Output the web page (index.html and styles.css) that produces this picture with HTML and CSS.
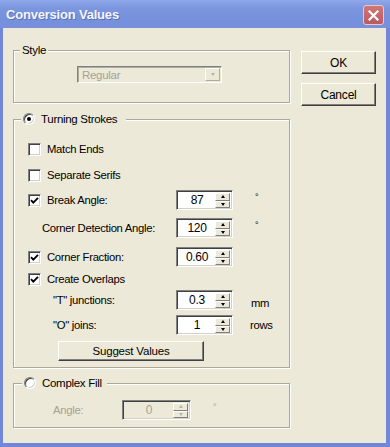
FILE: index.html
```html
<!DOCTYPE html>
<html>
<head>
  <meta charset="utf-8">
  <title>Conversion Values</title>
  <link rel="stylesheet" href="styles.css">
</head>
<body>
  <div class="window">
    <div class="titlebar">
      <span class="title">Conversion Values</span>
      <button class="close-btn" aria-label="Close">
        <svg width="11" height="11" viewBox="0 0 11 11"><path d="M1.5 1.5 L9.5 9.5 M9.5 1.5 L1.5 9.5" stroke="#fff" stroke-width="2.2" stroke-linecap="square"/></svg>
      </button>
    </div>

    <div class="client">
      <div class="groups">

        <!-- Style -->
        <div class="group style-group">
          <div class="group-title"><span>Style</span></div>
          <div class="combo disabled">
            <span class="combo-val">Regular</span>
            <span class="combo-btn"><span class="arrow-down"></span></span>
          </div>
        </div>

        <!-- Turning Strokes -->
        <div class="group strokes-group">
          <div class="group-title">
            <span class="radio checked"></span>
            <span>Turning Strokes</span>
          </div>

          <div class="row r-match">
            <label class="lbl"><span class="check"></span>Match Ends</label>
          </div>
          <div class="row r-serifs">
            <label class="lbl"><span class="check"></span>Separate Serifs</label>
          </div>
          <div class="row r-break">
            <label class="lbl"><span class="check on"><svg width="9" height="9" viewBox="0 0 9 9"><path d="M1 4.2 L3.3 6.6 L8 1.8" fill="none" stroke="#000" stroke-width="1.9"/></svg></span>Break Angle:</label>
            <div class="spin"><span class="spin-val">87</span><span class="spin-btns"><span class="sb"><i class="arrow-up"></i></span><span class="sb"><i class="arrow-down"></i></span></span></div>
            <span class="unit deg">°</span>
          </div>
          <div class="row r-corner">
            <span class="lbl indent">Corner Detection Angle:</span>
            <div class="spin"><span class="spin-val">120</span><span class="spin-btns"><span class="sb"><i class="arrow-up"></i></span><span class="sb"><i class="arrow-down"></i></span></span></div>
            <span class="unit deg">°</span>
          </div>
          <div class="row r-fraction">
            <label class="lbl"><span class="check on"><svg width="9" height="9" viewBox="0 0 9 9"><path d="M1 4.2 L3.3 6.6 L8 1.8" fill="none" stroke="#000" stroke-width="1.9"/></svg></span>Corner Fraction:</label>
            <div class="spin"><span class="spin-val">0.60</span><span class="spin-btns"><span class="sb"><i class="arrow-up"></i></span><span class="sb"><i class="arrow-down"></i></span></span></div>
          </div>
          <div class="row r-overlaps">
            <label class="lbl"><span class="check on"><svg width="9" height="9" viewBox="0 0 9 9"><path d="M1 4.2 L3.3 6.6 L8 1.8" fill="none" stroke="#000" stroke-width="1.9"/></svg></span>Create Overlaps</label>
          </div>
          <div class="row r-tjunc">
            <span class="lbl sub">"T" junctions:</span>
            <div class="spin"><span class="spin-val">0.3</span><span class="spin-btns"><span class="sb"><i class="arrow-up"></i></span><span class="sb"><i class="arrow-down"></i></span></span></div>
            <span class="unit mm">mm</span>
          </div>
          <div class="row r-ojoin">
            <span class="lbl sub">"O" joins:</span>
            <div class="spin"><span class="spin-val">1</span><span class="spin-btns"><span class="sb"><i class="arrow-up"></i></span><span class="sb"><i class="arrow-down"></i></span></span></div>
            <span class="unit rows">rows</span>
          </div>
          <button class="btn suggest-btn">Suggest Values</button>
        </div>

        <!-- Complex Fill -->
        <div class="group fill-group">
          <div class="group-title">
            <span class="radio"></span>
            <span>Complex Fill</span>
          </div>
          <div class="row angle-row disabled">
            <span class="lbl sub">Angle:</span>
            <div class="spin wide"><span class="spin-val">0</span><span class="spin-btns"><span class="sb"><i class="arrow-up"></i></span><span class="sb"><i class="arrow-down"></i></span></span></div>
            <span class="unit deg">°</span>
          </div>
        </div>
      </div>

      <div class="actions">
        <button class="btn">OK</button>
        <button class="btn">Cancel</button>
      </div>
    </div>
  </div>
</body>
</html>
```

FILE: styles.css
```css
:root {
  --face: #ece9d8;
  --frame: #7387d8;
  --shadow: #808080;
  --dark: #404040;
  --disabled: #a5a296;
}

* {
  box-sizing: border-box;
  margin: 0;
  padding: 0;
}

html, body {
  width: 390px;
  height: 447px;
  overflow: hidden;
  background: var(--face);
  font-family: "Liberation Sans", Arial, sans-serif;
  font-size: 11px;
  letter-spacing: -0.3px;
  color: #000;
}

.window {
  display: flex;
  flex-direction: column;
  width: 390px;
  height: 447px;
}

/* Title bar */
.titlebar {
  height: 28px;
  display: flex;
  align-items: center;
  padding: 0 6px 0 6px;
  background: linear-gradient(#90a8ea, #7b95de 30%, #7590dc 80%, #7a90da);
}

.title {
  flex: 1;
  font-size: 13px;
  font-weight: bold;
  letter-spacing: -0.2px;
  color: #f4f6ff;
  text-shadow: 1px 1px 0 #5b6fb8;
}

.close-btn {
  width: 21px;
  height: 20px;
  margin-top: 2px;
  display: flex;
  align-items: center;
  justify-content: center;
  background: linear-gradient(#d07878, #bb5a60);
  border: 1px solid #e8c8cc;
  border-radius: 3px;
}

/* Client area */
.client {
  flex: 1;
  display: flex;
  padding: 0 10px 0 10px;
  border-left: 3px solid var(--frame);
  border-right: 4px solid var(--frame);
  border-bottom: 4px solid var(--frame);
}

.groups {
  width: 277px;
  margin-top: 22px;
}

.actions {
  width: 75px;
  margin-left: 11px;
  padding-top: 23px;
  display: flex;
  flex-direction: column;
  gap: 9px;
}

.actions .btn {
  height: 23px;
  font-size: 12px;
}

/* Group boxes (etched) */
.group {
  display: flex;
  flex-direction: column;
  border: 1px solid #aca899;
  box-shadow: inset 1px 1px 0 #fff, 1px 1px 0 #fff;
}

.group-title {
  align-self: flex-start;
  display: flex;
  align-items: center;
  gap: 6px;
  height: 14px;
  margin-top: -8px;
  background: var(--face);
  font-size: 11.5px;
}

.style-group .group-title {
  margin-left: 6px;
  padding: 0 2px;
}

.style-group {
  padding-bottom: 19px;
}

.strokes-group {
  margin-top: 16px;
  padding-bottom: 6px;
}

.strokes-group .group-title {
  margin-left: 7px;
  padding: 0 9px 0 2px;
}

.fill-group {
  margin-top: 15px;
  padding-bottom: 7px;
}

.fill-group .group-title {
  margin-left: 8px;
  padding: 0 5px 0 2px;
}

/* Combo box */
.combo {
  display: flex;
  align-items: center;
  width: 145px;
  height: 17px;
  margin: 9px 0 0 63px;
  padding: 1px 1px 1px 4px;
  border-top: 1px solid var(--shadow);
  border-left: 1px solid var(--shadow);
  border-right: 1px solid #fff;
  border-bottom: 1px solid #fff;
  box-shadow: inset 1px 1px 0 #b0ad9f;
  font-size: 11.5px;
}

.combo.disabled {
  color: var(--disabled);
}

.combo-val {
  flex: 1;
}

.combo-btn {
  width: 15px;
  height: 13px;
  display: flex;
  align-items: center;
  justify-content: center;
  border: 1px solid;
  border-color: #fff #b0ad9f #b0ad9f #fff;
}

.combo-btn .arrow-down {
  border-top-color: #b8b5a8;
}

/* Rows */
.row {
  display: grid;
  grid-template-columns: 162px 57px 1fr;
  align-items: center;
  height: 20px;
  font-size: 11.3px;
}

.lbl {
  display: flex;
  align-items: center;
  gap: 6px;
  padding-left: 14px;
  white-space: nowrap;
}

.lbl.indent {
  padding-left: 28px;
}

.lbl.sub {
  padding-left: 39px;
}

.r-match { margin-top: 13px; }
.r-serifs { margin-top: 6px; }
.r-break { margin-top: 5px; }
.r-corner { margin-top: 8px; }
.r-fraction { margin-top: 9px; }
.r-overlaps { margin-top: 2px; }
.r-tjunc { margin-top: 1px; }
.r-ojoin { margin-top: 5px; }

.unit.deg { padding-left: 22px; font-size: 9px; margin-top: -6px; }
.unit.mm { padding-left: 18px; margin-top: 6px; }
.unit.rows { padding-left: 17px; }

/* Checkbox */
.check {
  width: 13px;
  height: 13px;
  flex: 0 0 13px;
  display: flex;
  align-items: center;
  justify-content: center;
  background: #fff;
  border-top: 1px solid var(--shadow);
  border-left: 1px solid var(--shadow);
  border-right: 1px solid #fff;
  border-bottom: 1px solid #fff;
  box-shadow: inset 1px 1px 0 var(--dark), inset -1px -1px 0 #d4d0c8;
}

/* Radio */
.radio {
  position: relative;
  width: 12px;
  height: 12px;
  flex: 0 0 12px;
  border-radius: 50%;
  background: #fff;
  border: 1px solid;
  border-color: var(--shadow) #fff #fff var(--shadow);
  box-shadow: inset 1px 1px 0 var(--dark), inset -1px -1px 0 #d4d0c8;
}

.radio.checked::after {
  content: "";
  position: absolute;
  left: 3px;
  top: 3px;
  width: 4px;
  height: 4px;
  border-radius: 50%;
  background: #000;
}

/* Spin box */
.spin {
  display: flex;
  width: 57px;
  height: 20px;
  padding: 2px 2px 1px 2px;
  background: #fff;
  border-top: 1px solid var(--shadow);
  border-left: 1px solid var(--shadow);
  border-right: 1px solid #fff;
  border-bottom: 1px solid #fff;
  box-shadow: inset 1px 1px 0 var(--dark), inset -1px -1px 0 #d4d0c8;
}

.spin.wide {
  width: 69px;
}

.spin-val {
  flex: 1;
  text-align: center;
  line-height: 15px;
  font-size: 12px;
}

.spin-btns {
  width: 15px;
  display: flex;
  flex-direction: column;
}

.sb {
  flex: 1;
  display: flex;
  align-items: center;
  justify-content: center;
  background: var(--face);
  border: 1px solid;
  border-color: #fff var(--shadow) var(--shadow) #fff;
}

.arrow-up,
.arrow-down {
  display: block;
  width: 0;
  height: 0;
  border-left: 2.5px solid transparent;
  border-right: 2.5px solid transparent;
}

.arrow-up { border-bottom: 3px solid #000; }
.arrow-down { border-top: 3px solid #000; }

/* Disabled row */
.angle-row {
  grid-template-columns: 108px 69px 1fr;
  margin-top: 10px;
}

.disabled .lbl,
.disabled .unit,
.disabled .spin-val {
  color: var(--disabled);
}

.disabled .spin {
  background: var(--face);
}

.disabled .arrow-up { border-bottom-color: #b8b5a8; }
.disabled .arrow-down { border-top-color: #b8b5a8; }

/* Push buttons */
.btn {
  display: flex;
  align-items: center;
  justify-content: center;
  background: var(--face);
  font-family: inherit;
  font-size: 11.5px;
  letter-spacing: -0.2px;
  color: #000;
  border: 1px solid;
  border-color: #fff var(--dark) var(--dark) #fff;
  box-shadow: inset -1px -1px 0 var(--shadow);
}

.suggest-btn {
  width: 146px;
  height: 20px;
  margin: 6px 0 0 44px;
}
```
